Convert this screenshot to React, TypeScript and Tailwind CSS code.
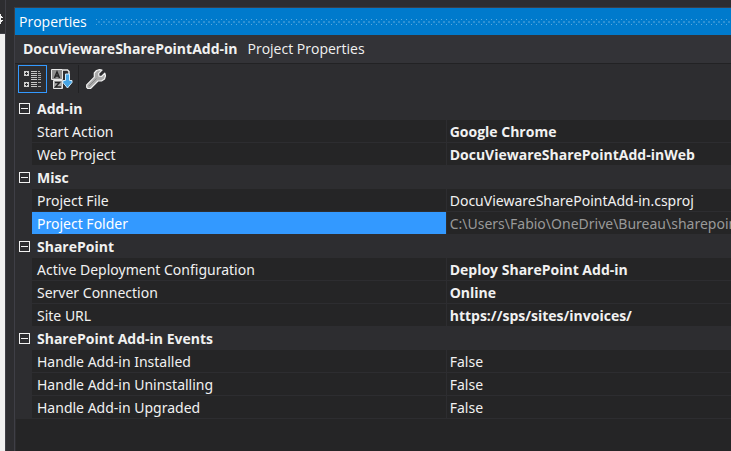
import { useState } from 'react';

interface Property {
  name: string;
  value: string;
  bold?: boolean;
  readOnly?: boolean;
}

interface Category {
  title: string;
  items: Property[];
}

const categories: Category[] = [
  {
    title: 'Add-in',
    items: [
      { name: 'Start Action', value: 'Google Chrome', bold: true },
      { name: 'Web Project', value: 'DocuViewareSharePointAdd-inWeb', bold: true },
    ],
  },
  {
    title: 'Misc',
    items: [
      { name: 'Project File', value: 'DocuViewareSharePointAdd-in.csproj' },
      { name: 'Project Folder', value: 'C:\\Users\\Fabio\\OneDrive\\Bureau\\sharepoint', readOnly: true },
    ],
  },
  {
    title: 'SharePoint',
    items: [
      { name: 'Active Deployment Configuration', value: 'Deploy SharePoint Add-in', bold: true },
      { name: 'Server Connection', value: 'Online', bold: true },
      { name: 'Site URL', value: 'https://sps/sites/invoices/', bold: true },
    ],
  },
  {
    title: 'SharePoint Add-in Events',
    items: [
      { name: 'Handle Add-in Installed', value: 'False' },
      { name: 'Handle Add-in Uninstalling', value: 'False' },
      { name: 'Handle Add-in Upgraded', value: 'False' },
    ],
  },
];

const CategorizedIcon = () => (
  <svg width="17" height="17" viewBox="0 0 17 17" fill="none" shapeRendering="crispEdges" aria-hidden="true">
    <path d="M0 0h5v5H0zM0 11h5v5H0z" fill="#d0d0d0" />
    <path d="M1 2.500h3M2.500 1v3M1 13.500h3M2.500 12v3" stroke="#2d2d30" />
    <path d="M7 .5h6M7 2.500h6M7 4.500h6M7 6.500h6M7 8.500h6M7 11.500h6M7 13.500h6M7 15.500h6" stroke="#c4c4c4" />
    <path d="M14 .5h2M14 2.500h3M14 4.500h3M14 6.500h3M14 8.500h3M14 11.500h3M14 15.500h3" stroke="#a8a8a8" />
  </svg>
);

const AlphabeticalIcon = () => (
  <svg width="22" height="20" viewBox="0 0 22 20" fill="none" aria-hidden="true">
    <path d="M.5.5h11v10H.5z" fill="#8e8e8e" stroke="#e8e8e8" />
    <path d="M3.500 9L6 3 8.500 9M4.500 7h3" stroke="#252526" strokeWidth="1.500" />
    <path d="M2.500 11.500h9v8h-9z" fill="#a8a8a8" stroke="#e8e8e8" />
    <path d="M4 13.500h4.500L4.500 18H10" stroke="#252526" strokeWidth="1.500" />
    <path d="M12 1h4.500l1.500 1.500V5" stroke="#e8e8e8" strokeWidth="1.500" />
    <path d="M14.500 5h4v6.500h2.500v2L16.500 19 12 13.500v-2h2.500z" fill="#45a5e6" stroke="#cfe9fb" />
  </svg>
);

const WrenchIcon = () => (
  <svg width="20" height="20" viewBox="0 0 20 20" fill="none" aria-hidden="true">
    <path
      d="M16 1.200L13.500.600 10.500 1.500 8.300 4v4.200L.7 15.800v2.500l1.200 1.200h2.600L12 12h3.500l3-2 1-3.200-.7-2.600-3.300 3.300-2.500-.3-.4-2.600z"
      fill="#a9a9a9"
      stroke="#f1f1f1"
      strokeWidth="1.200"
      strokeLinejoin="round"
    />
    <path d="M3 17l7.500-7.500" stroke="#858585" />
  </svg>
);

const CollapseGlyph = ({ open }: { open: boolean }) => (
  <svg width="11" height="11" viewBox="0 0 11 11" fill="none" stroke="#f1f1f1" shapeRendering="crispEdges" aria-hidden="true">
    <path d="M.5.5h10v10H.5zM2 5.500h7" />
    {!open && <path d="M5.500 2v7" />}
  </svg>
);

const TitleBar = () => (
  <div className="flex h-[27px] items-center gap-2 bg-[#007acc] pl-1 text-white">
    <h1>Properties</h1>
    <svg className="h-[6px] min-w-0 flex-1" shapeRendering="crispEdges" aria-hidden="true">
      <defs>
        <pattern id="grip" width="5" height="6" patternUnits="userSpaceOnUse">
          <path d="M1 0h1v1H1zM1 5h1v1H1z" fill="#59a8de" />
          <path d="M3 2h2v2H3z" fill="#2e91d5" />
        </pattern>
      </defs>
      <rect width="100%" height="6" fill="url(#grip)" />
    </svg>
  </div>
);

const Toolbar = () => (
  <div className="flex h-[33px] items-start pt-px pl-[3px]" role="toolbar">
    <button aria-label="Categorized" className="flex h-7 w-[29px] items-center justify-center border border-[#3399ff]">
      <CategorizedIcon />
    </button>
    <button aria-label="Alphabetical" className="flex h-7 w-[29px] items-center justify-center">
      <AlphabeticalIcon />
    </button>
    <div className="mx-[2px] h-7 w-px bg-[#222224]" />
    <button aria-label="Property Pages" className="flex h-7 w-[29px] items-center justify-center">
      <WrenchIcon />
    </button>
  </div>
);

const PropertyGrid = () => {
  const [closed, setClosed] = useState<string[]>([]);
  const [selected, setSelected] = useState('Project Folder');

  const toggle = (title: string) => {
    setClosed(closed.includes(title) ? closed.filter((t) => t !== title) : [...closed, title]);
  };

  return (
    <table className="w-full table-fixed border-separate border-spacing-0 bg-[#2d2d30] text-left">
      <colgroup>
        <col className="w-4" />
        <col className="w-[58%]" />
        <col />
      </colgroup>
      {categories.map(({ title, items }) => (
        <tbody key={title}>
          <tr className="h-[23px]">
            <td className="p-0 pl-[3px]">
              <button
                aria-label={`Toggle ${title}`}
                aria-expanded={!closed.includes(title)}
                onClick={() => toggle(title)}
                className="block"
              >
                <CollapseGlyph open={!closed.includes(title)} />
              </button>
            </td>
            <th colSpan={2} className="p-0 pl-[5px] font-bold">
              {title}
            </th>
          </tr>
          {!closed.includes(title) &&
            items.map((item) => (
              <tr key={item.name} className="h-[23px] leading-5" onClick={() => setSelected(item.name)}>
                <td className="p-0" />
                <th
                  className={`truncate border-r border-b border-[#2d2d30] p-0 pt-[2px] pl-[5px] font-['Noto_Sans',sans-serif] font-normal ${
                    selected === item.name ? 'bg-[#3399ff] text-white' : 'bg-[#252526]'
                  }`}
                >
                  {item.name}
                </th>
                <td
                  className={`overflow-hidden border-b border-[#2d2d30] bg-[#252526] p-0 pt-[2px] pl-[3px] whitespace-nowrap ${
                    item.bold ? 'font-bold' : "font-['Noto_Sans',sans-serif]"
                  } ${item.readOnly ? 'text-[#999999]' : ''}`}
                >
                  {item.value}
                </td>
              </tr>
            ))}
        </tbody>
      ))}
    </table>
  );
};

export default function App() {
  return (
    <div className="flex h-screen overflow-hidden bg-[#2d2d30] font-['Open_Sans','Noto_Sans',sans-serif] text-[14px] leading-[22px] text-[#f1f1f1]">
      {/* edge of the neighbouring document */}
      <div className="flex w-[5px] flex-col">
        <div className="flex h-[33px] items-center pt-1">
          <svg width="3" height="10" viewBox="0 0 3 10" shapeRendering="crispEdges" aria-hidden="true">
            <path d="M0 0h1v10H0zM1 2h1v2H1zM1 6h1v2H1zM2 3h1v1H2zM2 6h1v1H2z" fill="#f1f1f1" />
          </svg>
        </div>
        <div className="flex-1 border-t border-[#3f3f46] bg-[#f0f0f0]" />
      </div>
      <div className="w-[9px] border-l border-[#3f3f46]" />
      <section className="mt-[7px] flex min-w-0 flex-1 flex-col border-t border-l border-[#3f3f46]">
        <TitleBar />
        <div className="flex h-[29px] items-center gap-2.5 border-b border-[#222224] bg-[#333337] pl-2 whitespace-nowrap">
          <strong>DocuViewareSharePointAdd-in</strong>
          <span>Project Properties</span>
        </div>
        <Toolbar />
        <div className="ml-px flex-1 bg-[#252526]">
          <PropertyGrid />
        </div>
      </section>
    </div>
  );
}
